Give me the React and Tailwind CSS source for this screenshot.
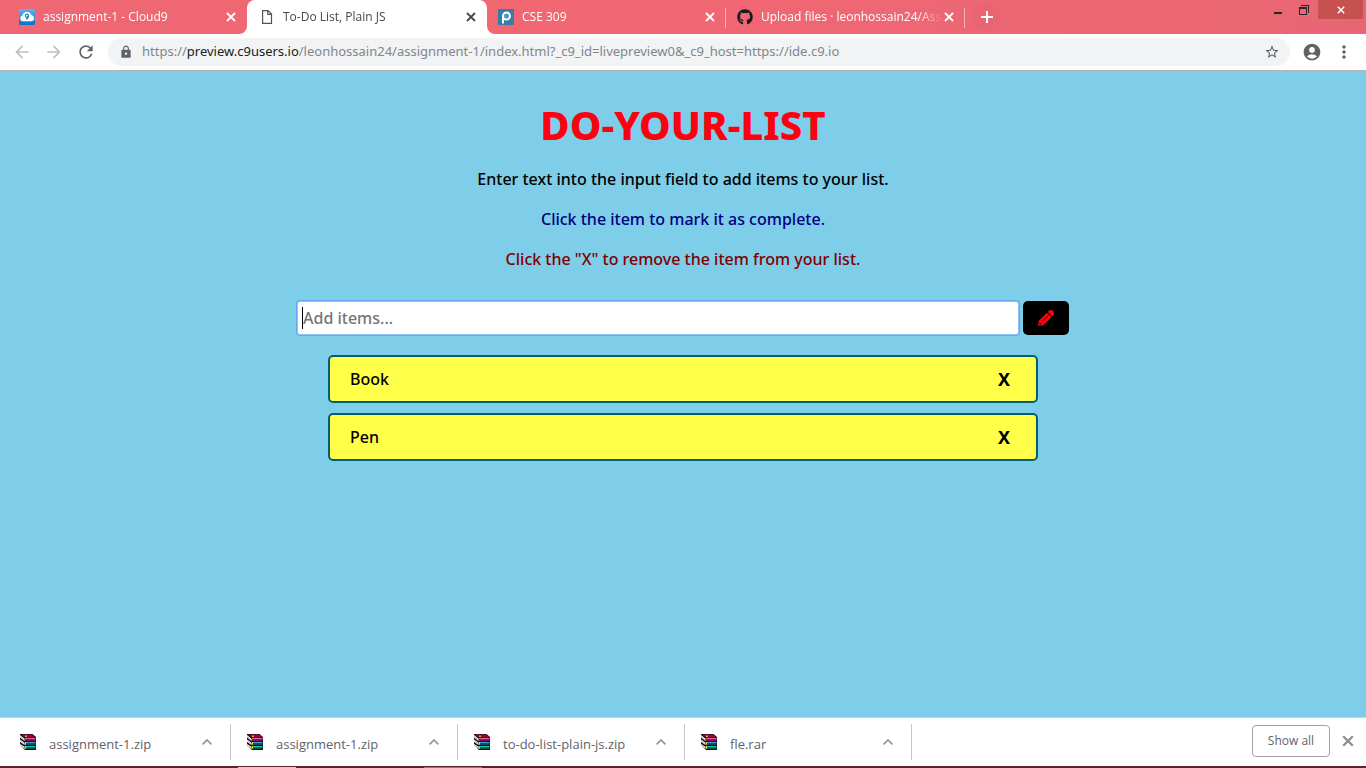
import React, { useState } from "react";
import { FaGithub } from "react-icons/fa";
import { MdAccountCircle, MdArrowBack, MdArrowForward, MdLock, MdMoreVert, MdRefresh, MdStarBorder } from "react-icons/md";

function Cross({ className }) {
  return (
    <svg viewBox="0 0 10 10" className={className} fill="none" stroke="currentColor" strokeWidth="1.8">
      <path d="M1 1l8 8M9 1l-8 8" />
    </svg>
  );
}

function CloudIcon() {
  return (
    <svg viewBox="0 0 16 16" className="size-4 shrink-0">
      <defs>
        <linearGradient id="cloud-bg" x1="0" y1="0" x2="0" y2="1">
          <stop offset="0" stopColor="#5db4ee" />
          <stop offset="1" stopColor="#0b71c6" />
        </linearGradient>
      </defs>
      <rect width="16" height="16" rx="1.5" fill="url(#cloud-bg)" />
      <path d="M4 12.3a2.9 2.9 0 01-.6-5.7A4.7 4.7 0 0112.300 6a3.200 3.200 0 01.2 6.300z" fill="#fff" />
      <circle cx="8" cy="6.700" r="1.500" fill="none" stroke="#1b79c8" strokeWidth="1.200" />
      <path d="M9.500 6.700c0 2-.8 3-2.500 3.200" fill="none" stroke="#1b79c8" strokeWidth="1.200" />
    </svg>
  );
}

function PageIcon() {
  return (
    <svg viewBox="0 0 16 16" className="size-4 shrink-0" fill="none" stroke="#50555a" strokeWidth="1.200">
      <path d="M3.600 1.600h5.400l3.500 3.500v9.300H3.600zM8.800 1.600v3.700h3.700" />
    </svg>
  );
}

function PIcon() {
  return (
    <svg viewBox="0 0 16 16" className="size-4 shrink-0">
      <rect width="16" height="16" fill="#3a7ca9" />
      <circle cx="8.500" cy="7" r="3.500" fill="#4d9bcb" stroke="#fff" strokeWidth="1.900" />
      <path d="M5 7v7.500" stroke="#fff" strokeWidth="1.900" />
    </svg>
  );
}

function PencilIcon() {
  return (
    <svg viewBox="0 0 16 16" className="size-4" fill="currentColor">
      <path d="M0 15.800L.6 11 8.900 2.700l4.500 4.500L5 15.400z" />
      <path d="M9.700 1.900l.9-.9a3 3 0 014.500.1 3 3 0 01.1 4.400l-.9.900z" />
      <path d="M4.500 11.200l5.600-5.500" stroke="#000" strokeWidth=".8" />
      <path d="M1.600 12.600l1.800 1.800-1.900.2z" fill="#000" />
    </svg>
  );
}

function ArchiveIcon() {
  return (
    <svg viewBox="0 0 16 16" className="size-4 shrink-0">
      <path d="M0 0h12.500L16 3v13H5l-5-4.500z" fill="#111" />
      <path d="M0 1l4.600 3.700V7L0 3.500zM0 5.500l4.600 3.200V11L0 8zM0 10l4.600 2.700V15L0 12z" fill="#fff" />
      <path d="M0 2.400l4.600 3.500M0 6.900l4.600 3M0 11.200l4.600 2.700" stroke="#777" strokeWidth=".5" />
      <path d="M1 .5h11.300L15.500 3.500H5z" fill="#8a0b38" />
      <path d="M5 1.500h2v1.500H5z" fill="#dbb02c" />
      <path d="M5 4h10.500v1.200H5z" fill="#ee58a8" />
      <path d="M5 5.200h10.500v1.500H5z" fill="#b00c66" />
      <path d="M6 8h9.500v1.200H6z" fill="#3d9edc" />
      <path d="M6 9.200h9.500v1.500H6z" fill="#0a5a9c" />
      <path d="M6 12h9.500v1.200H6z" fill="#28c294" />
      <path d="M6 13.200h9.500v1.500H6z" fill="#077f5a" />
      <path d="M5 8h1v2.700H5zM5 12h1v2.700H5z" fill="#e6d24a" />
    </svg>
  );
}

const tabs = [
  { title: "assignment-1 - Cloud9", icon: <CloudIcon /> },
  { title: "To-Do List, Plain JS", icon: <PageIcon />, active: true },
  { title: "CSE 309", icon: <PIcon />, divider: true },
  { title: "Upload files · leonhossain24/Assi", icon: <FaGithub className="size-4 shrink-0 text-[#1b1b1f]" />, divider: true },
];

function Tab({ title, icon, active, divider }) {
  return (
    <div className={active ? "relative flex h-full w-60 items-center rounded-t-lg bg-white pr-[11px] pl-3 text-[#45494d]" : "relative flex h-full w-[239px] items-center pr-[11px] pl-[11px] text-white"}>
      {active && (
        <svg viewBox="0 0 256 8" className="absolute bottom-0 -left-2 h-2 w-64" fill="#fff">
          <path d="M0 8a8 8 0 008-8v8zM256 8a8 8 0 01-8-8v8z" />
        </svg>
      )}
      {icon}
      <a href="#tab" className="ml-2 w-[182px] whitespace-nowrap [mask-image:linear-gradient(to_right,#000_86%,transparent)]">{title}</a>
      <button aria-label={"Close " + title} className="ml-auto">
        <Cross className="size-[10px]" />
      </button>
      {divider && <span className="absolute top-2 right-0 h-5 w-px bg-[#f9b3ba]" />}
    </div>
  );
}

function TabStrip() {
  return (
    <header className="flex h-[34px] items-center bg-linear-to-r from-[#ee6772] via-[#f16773] to-[#e86673] text-[12px]">
      <nav aria-label="Tabs" className="flex h-full pl-2">
        {tabs.map((tab) => <Tab key={tab.title} {...tab} />)}
      </nav>
      <button aria-label="New tab" className="ml-2 flex size-7 items-center justify-center rounded-full bg-[#ea6572] text-white">
        <svg viewBox="0 0 12 12" className="size-3" stroke="currentColor" strokeWidth="2"><path d="M6 0v12M0 6h12" /></svg>
      </button>
      <div className="mr-[3px] ml-auto flex h-full items-start text-[#2b2527]">
        <button aria-label="Minimize" className="flex h-[19px] w-[26px] items-center justify-center">
          <svg viewBox="0 0 8 10" className="h-[10px] w-2"><path d="M0 7h8v2H0z" fill="currentColor" /></svg>
        </button>
        <button aria-label="Restore" className="flex h-[19px] w-[26px] items-center justify-center">
          <svg viewBox="0 0 10 10" className="size-[10px]" shapeRendering="crispEdges" fill="currentColor">
            <path d="M2 0h8v8H9V1H2zM0 2h8v8H0zM1 4v5h6V4z" fillRule="evenodd" />
          </svg>
        </button>
        <button aria-label="Close" className="ml-[1px] flex h-[19px] w-[45px] items-center justify-center bg-[#c75050] text-white">
          <Cross className="size-2" />
        </button>
      </div>
    </header>
  );
}

function Toolbar() {
  return (
    <div className="flex h-[37px] items-center border-b border-[#b5b1b1] bg-white pl-3 text-[#5f6368]">
      <button aria-label="Back" className="mr-3 text-[#bdbfc1]"><MdArrowBack className="size-5" /></button>
      <button aria-label="Forward" className="mr-3 text-[#bdbfc1]"><MdArrowForward className="size-5" /></button>
      <button aria-label="Reload"><MdRefresh className="size-5" /></button>
      <div className="ml-3 flex h-7 flex-1 items-center rounded-full bg-[#f1f3f4] pr-[10px] pl-[11px]">
        <MdLock className="size-[14px]" />
        <a href="#address" className="ml-[9px] flex-1 font-['Noto_Sans',sans-serif] text-[13px] whitespace-nowrap text-[#80868b]">
          https://<span className="text-[#202124]">preview.c9users.io</span>/leonhossain24/assignment-1/index.html?_c9_id=livepreview0&amp;_c9_host=https://ide.c9.io
        </a>
        <button aria-label="Bookmark this page"><MdStarBorder className="size-4" /></button>
      </div>
      <button aria-label="Profile" className="ml-3"><MdAccountCircle className="size-5" /></button>
      <button aria-label="Menu" className="mr-3 ml-3"><MdMoreVert className="size-5" /></button>
    </div>
  );
}

function TodoPage() {
  const [items, setItems] = useState(["Book", "Pen"]);
  const [text, setText] = useState("");

  const add = (event) => {
    event.preventDefault();
    if (text.trim()) {
      setItems([...items, text.trim()]);
      setText("");
    }
  };

  return (
    <main className="flex flex-1 flex-col items-center bg-[#7ecee9] px-4 pt-[27px] font-['Noto_Sans',sans-serif] text-[16px] leading-6 font-medium text-black">
      <h1 className="text-[40px] leading-[54px] font-extrabold text-[#ff0010]">DO-YOUR-LIST</h1>
      <div className="mt-[15px] flex flex-col gap-4 text-center">
        <p>Enter text into the input field to add items to your list.</p>
        <p className="text-[#000080]">Click the item to mark it as complete.</p>
        <p className="text-[#800000]">Click the "X" to remove the item from your list.</p>
      </div>
      <form onSubmit={add} className="mt-[30px] flex w-full max-w-[772px] items-center gap-1">
        <div className="relative flex-1">
          <input
            aria-label="Add items"
            placeholder="Add items..."
            value={text}
            onChange={(event) => setText(event.target.value)}
            className="block h-[34px] w-full rounded-[3px] border border-[#8fc2fb] bg-white px-[5px] ring-1 ring-[#62a9f2] outline-none placeholder:text-[#757575]"
          />
          <span className="absolute top-[6px] left-[5px] h-[22px] w-px bg-black" />
        </div>
        <button aria-label="Add" className="flex h-[34px] w-[46px] items-center justify-center rounded-[5px] bg-black text-[#ff0010]">
          <PencilIcon />
        </button>
      </form>
      <ul className="mt-5 flex w-full max-w-[710px] flex-col gap-[10px]">
        {items.map((item) => (
          <li key={item} className="flex h-12 items-center justify-between rounded-[5px] border-2 border-[#006070] bg-[#ffff4a] pr-[26px] pl-5">
            <span>{item}</span>
            <button aria-label={"Remove " + item} onClick={() => setItems(items.filter((other) => other !== item))} className="text-[18px] font-bold">X</button>
          </li>
        ))}
      </ul>
    </main>
  );
}

const downloads = ["assignment-1.zip", "assignment-1.zip", "to-do-list-plain-js.zip", "fle.rar"];

function DownloadBar() {
  return (
    <footer className="border-t border-[#c9d3d8] bg-white text-[#5f6368]">
      <div className="flex h-12 items-center pl-1">
        {downloads.map((name, index) => (
          <div key={index} className="flex h-9 w-[227px] items-center border-r border-[#c8c8c8] pr-[18px] pl-4">
            <ArchiveIcon />
            <a href="#download" className="mt-[6px] ml-[13px] text-[13px]">{name}</a>
            <button aria-label={"Options for " + name} className="ml-auto">
              <svg viewBox="0 0 10 6" className="h-[6px] w-[10px]" fill="none" stroke="#909294" strokeWidth="1.600"><path d="M.6 5.400L5 1l4.400 4.400" /></svg>
            </button>
          </div>
        ))}
        <button className="mb-[2px] ml-auto h-8 w-[78px] rounded border border-[#a3a3a3] text-[12px] font-medium">Show all</button>
        <button aria-label="Close downloads" className="mr-3 mb-[2px] ml-3 text-[#898c90]"><Cross className="size-3" /></button>
      </div>
      <div className="flex h-[2px] bg-[#5a262b]">
        <span className="mt-px ml-[238px] h-px w-[58px] bg-[#e6c9cc]" />
        <span className="mt-px ml-32 h-px w-[58px] bg-[#9b7174]" />
      </div>
    </footer>
  );
}

export default function App() {
  return (
    <div className="flex min-h-screen flex-col font-['Open_Sans',sans-serif]">
      <TabStrip />
      <Toolbar />
      <TodoPage />
      <DownloadBar />
    </div>
  );
}
